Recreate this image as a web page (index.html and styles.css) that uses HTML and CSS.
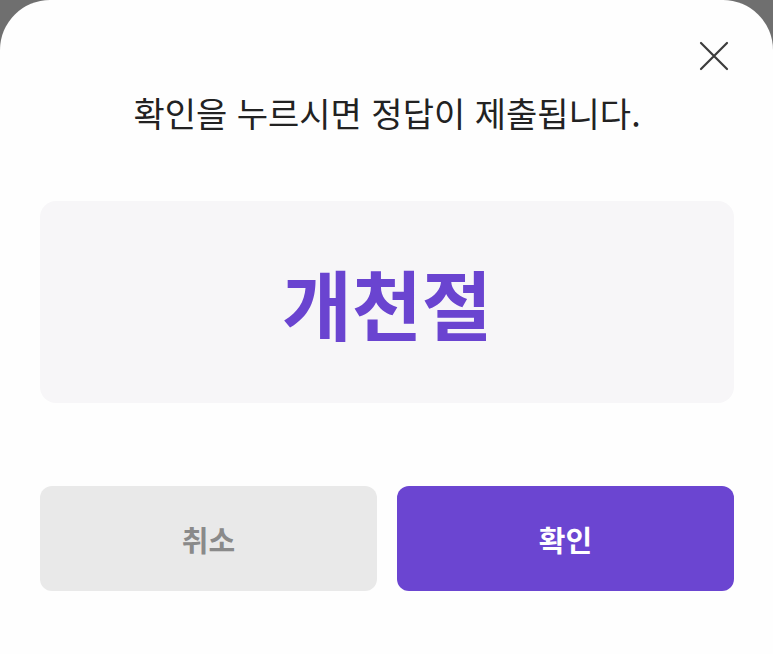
FILE: index.html
```html
<!DOCTYPE html>
<html lang="ko">
<head>
<meta charset="utf-8">
<link rel="stylesheet" href="styles.css">
</head>
<body>
<div class="sheet">
  <div class="top">
    <button class="close" aria-label="닫기">
      <svg width="30" height="30" viewBox="0 0 30 30"><path d="M2 2 L28 28 M28 2 L2 28" stroke="#3c3c3c" stroke-width="2.2" stroke-linecap="round" fill="none"/></svg>
    </button>
  </div>
  <p class="title">확인을 누르시면 정답이 제출됩니다.</p>
  <div class="answer"><span>개천절</span></div>
  <div class="actions">
    <button class="btn cancel">취소</button>
    <button class="btn ok">확인</button>
  </div>
</div>
</body>
</html>
```
FILE: styles.css
```css
html, body {
  margin: 0;
  padding: 0;
  background: #6f6f6f;
  height: 100%;
  overflow: hidden;
}
.sheet {
  background: #fefefe;
  border-radius: 50px 50px 0 0;
  height: 100%;
  box-sizing: border-box;
  padding: 0 39px 0 40px;
  font-family: "Noto Sans CJK KR", "Noto Sans", sans-serif;
  display: flex;
  flex-direction: column;
}
.top {
  display: flex;
  justify-content: flex-end;
  padding-top: 41px;
  height: 30px;
}
.close {
  border: 0;
  background: none;
  padding: 0;
  margin-right: 5px;
  width: 30px;
  height: 30px;
}
.close svg { display: block; }
.title {
  margin: 18px 0 0;
  text-align: center;
  font-size: 34px;
  line-height: 48px;
  color: #222;
  letter-spacing: 0;
}
.answer {
  margin-top: 64px;
  height: 202px;
  background: #f7f6f8;
  border-radius: 16px;
  display: flex;
  align-items: center;
  justify-content: center;
}
.answer span {
  font-size: 76px;
  font-weight: 700;
  color: #6a44d0;
  line-height: 1;
}
.actions {
  margin-top: 83px;
  display: flex;
  gap: 20px;
}
.btn {
  flex: 1;
  height: 105px;
  border: 0;
  border-radius: 12px;
  font-family: "Noto Sans CJK KR", "Noto Sans", sans-serif;
  font-size: 29px;
  font-weight: 700;
  padding: 0;
}
.cancel {
  background: #e9e9e9;
  color: #8a8a8a;
}
.ok {
  background: #6b45d1;
  color: #fff;
}
```
